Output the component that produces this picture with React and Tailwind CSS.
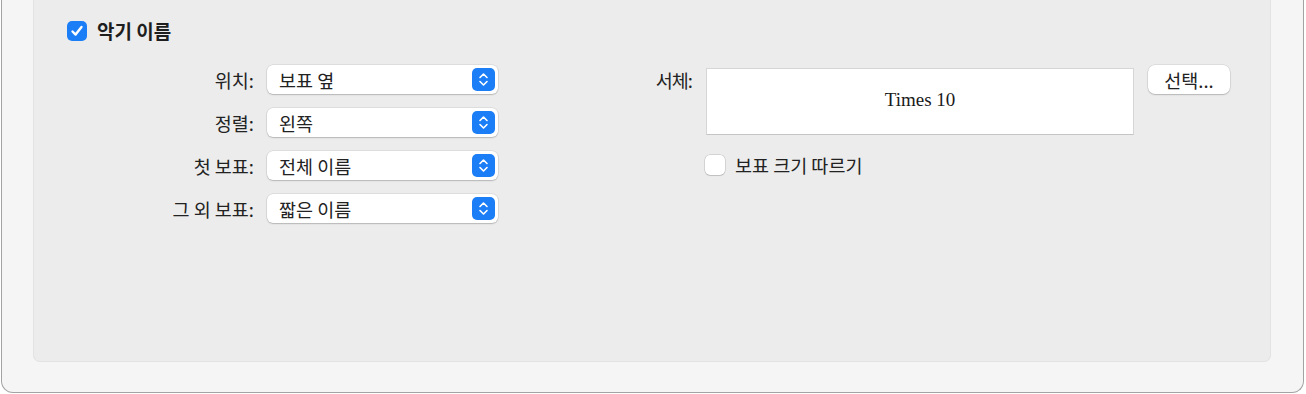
import { useState } from "react";

const KR = { fontFamily: '"Noto Sans CJK KR", "Noto Sans", sans-serif' };

const Stepper = () => (
  <div className="w-[23px] h-[23px] rounded-[5px] bg-[#1c7ef6] flex items-center justify-center">
    <svg width="23" height="23" viewBox="0 0 23 23" fill="none">
      <path d="M8 9.5 L11.5 6 L15 9.5" stroke="white" strokeWidth="1.6" strokeLinecap="round" strokeLinejoin="round" />
      <path d="M8 13.5 L11.5 17 L15 13.5" stroke="white" strokeWidth="1.6" strokeLinecap="round" strokeLinejoin="round" />
    </svg>
  </div>
);

const PopupRow = ({ label, value }) => (
  <div className="flex items-center gap-[13px]">
    <div className="w-[187px] text-right text-[18.5px] leading-[24px] text-[#222]">{label}</div>
    <div className="w-[231px] h-[29px] bg-white rounded-[6px] shadow-[0_0_0_0.5px_rgba(0,0,0,0.12),0_1px_1.5px_rgba(0,0,0,0.18)] flex items-center justify-between pl-[12px] pr-[3px]">
      <span className="text-[18.5px] leading-[24px] text-[#222]">{value}</span>
      <Stepper />
    </div>
  </div>
);

const Check = ({ checked, onClick }) =>
  checked ? (
    <button onClick={onClick} className="w-[20px] h-[20px] rounded-[5px] bg-[#1c7ef6] flex items-center justify-center">
      <svg width="14" height="14" viewBox="0 0 14 14" fill="none">
        <path d="M2.5 7.5 L5.6 10.6 L11.5 3" stroke="white" strokeWidth="2.4" strokeLinecap="round" strokeLinejoin="round" />
      </svg>
    </button>
  ) : (
    <button onClick={onClick} className="w-[20px] h-[20px] rounded-[5px] bg-white shadow-[0_0_0_0.5px_rgba(0,0,0,0.2),0_1px_1px_rgba(0,0,0,0.1)]" />
  );

export default function App() {
  const [showNames, setShowNames] = useState(true);
  const [followSize, setFollowSize] = useState(false);

  const rows = [
    ["위치:", "보표 옆"],
    ["정렬:", "왼쪽"],
    ["첫 보표:", "전체 이름"],
    ["그 외 보표:", "짧은 이름"],
  ];

  return (
    <div className="w-[1306px] h-[394px] bg-white" style={KR}>
      <div className="ml-[1px] w-[1303px] h-[393px] bg-[#f5f5f5] border border-t-0 border-[#a3a3a3] rounded-b-[12px] pl-[31px] pr-[32px]">
        <div className="w-full h-[362px] bg-[#ececec] border border-t-0 border-[#e2e2e2] rounded-b-[7px] pl-[33px] pt-[21px]">
          <div className="flex items-center gap-[10px] h-[20px]">
            <Check checked={showNames} onClick={() => setShowNames(!showNames)} />
            <span className="text-[19px] leading-[24px] font-bold text-[#1e1e1e]">악기 이름</span>
          </div>

          <div className="flex mt-[24px]">
            <div className="flex flex-col gap-[14px]">
              {rows.map(([label, value]) => (
                <PopupRow key={label} label={label} value={value} />
              ))}
            </div>

            <div className="ml-[102px] flex flex-col">
              <div className="flex items-start gap-[14px]">
                <div className="w-[92px] h-[29px] flex items-center justify-end text-[18.5px] leading-[24px] text-[#222] tracking-[-1px]">서체:</div>
                <div className="mt-[3px] w-[428px] h-[67px] bg-white border border-[#d6d6d6] border-b-[#c4c4c4] flex items-center justify-center">
                  <span className="text-[19px] leading-[24px] text-[#1a1a1a] -mt-[4px]" style={{ fontFamily: '"Liberation Serif", serif' }}>
                    Times 10
                  </span>
                </div>
                <button className="w-[82px] h-[29px] bg-white rounded-[7px] shadow-[0_0_0_0.5px_rgba(0,0,0,0.12),0_1px_1.5px_rgba(0,0,0,0.18)] text-[18.5px] leading-[24px] text-[#222]">
                  선택...
                </button>
              </div>
              <div className="ml-[105px] mt-[18px] flex items-center gap-[10px]">
                <Check checked={followSize} onClick={() => setFollowSize(!followSize)} />
                <span className="text-[18.5px] leading-[24px] text-[#222]">보표 크기 따르기</span>
              </div>
            </div>
          </div>
        </div>
      </div>
    </div>
  );
}
